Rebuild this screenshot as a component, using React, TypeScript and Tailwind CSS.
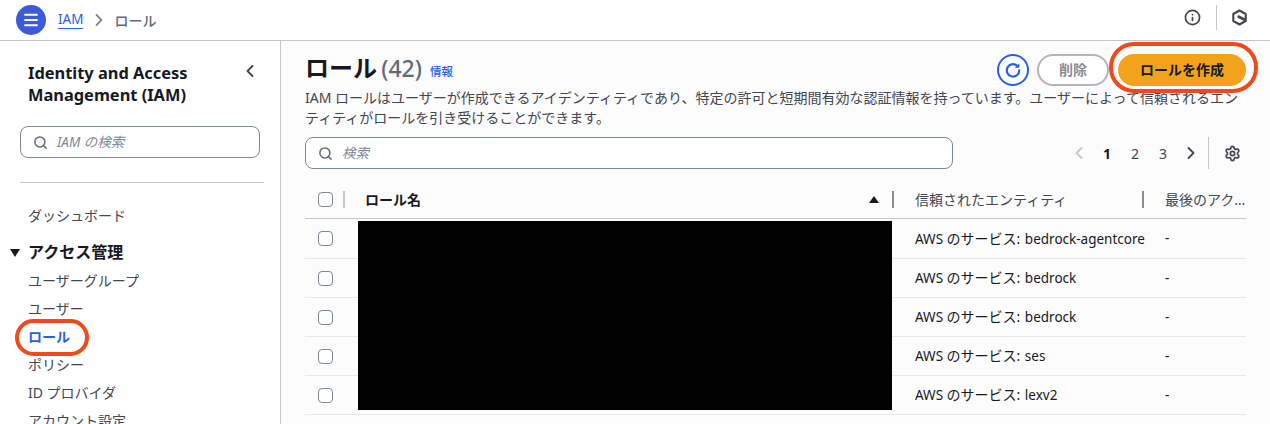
import { ChevronLeft, ChevronRight, Info, Menu, Search, Settings } from "lucide-react";

const navItems = ["ユーザーグループ", "ユーザー", "ロール", "ポリシー", "ID プロバイダ", "アカウント設定"];

const rows = ["bedrock-agentcore", "bedrock", "bedrock", "ses", "lexv2"];

function Checkbox() {
  return <div className="w-[15px] h-[15px] rounded-[4px] border border-[#7d8998] bg-white" />;
}

function SearchBox({ placeholder, className }: { placeholder: string; className: string }) {
  return (
    <div className={`flex items-center h-8 border border-[#7d8998] rounded-lg bg-white pl-[12px] ${className}`}>
      <Search className="w-[15px] h-[15px] text-[#5f6b7a]" strokeWidth={2.4} />
      <span className="ml-[9px] text-[13.5px] italic text-[#7d8998]">{placeholder}</span>
    </div>
  );
}

function Sidebar() {
  return (
    <aside className="w-[281px] shrink-0 border-r border-[#c6c6cd] bg-white pt-[21px] overflow-hidden">
      <div className="flex justify-between pl-[28px] pr-[20px]">
        <h2 className="text-[16.4px] leading-[22px] font-bold text-[#16191f]">
          Identity and Access
          <br />
          Management (IAM)
        </h2>
        <ChevronLeft className="w-5 h-5 text-[#424650] -mt-[1px]" strokeWidth={2.2} />
      </div>
      <SearchBox placeholder="IAM の検索" className="mx-[20px] mt-[20px]" />
      <div className="mx-[20px] mt-[24px] border-t border-[#c6c6cd] w-[244px]" />
      <div className="mt-[23px] pl-[28px] text-[14px] leading-[20px] text-[#424650]">ダッシュボード</div>
      <div className="relative mt-[16px] pl-[28px] text-[16px] leading-[20px] font-bold text-[#16191f]">
        <span className="absolute left-[10px] top-[7px] w-0 h-0 border-l-[5px] border-r-[5px] border-t-[8px] border-l-transparent border-r-transparent border-t-[#16191f]" />
        アクセス管理
      </div>
      <ul className="mt-[5px] pl-[28px] text-[14px] leading-[20px] text-[#424650]">
        {navItems.map((item) => (
          <li key={item} className={`h-[28px] flex items-center ${item === "ロール" ? "text-[#295eea] font-bold" : ""}`}>
            {item}
          </li>
        ))}
      </ul>
    </aside>
  );
}

function Row({ service, first }: { service: string; first: boolean }) {
  return (
    <div className={`grid grid-cols-[53px_536px_250px_1fr] items-center border-b border-[#e8e8ec] text-[13.5px] text-[#16191f] ${first ? "h-[40px]" : "h-[39px]"}`}>
      <div className="pl-[13px]">
        <Checkbox />
      </div>
      <div />
      <div className="pl-[21px] whitespace-nowrap">
        AWS <span className="text-[14px] mr-[1px]">のサービス:</span> {service}
      </div>
      <div className="pl-[21px]">-</div>
    </div>
  );
}

export default function App() {
  return (
    <div
      className="relative w-[1270px] h-[424px] overflow-hidden bg-white"
      style={{ fontFamily: '"Noto Sans", "Noto Sans CJK JP", sans-serif' }}
    >
      <header className="h-[41px] flex items-center border-b border-[#c6c6cd] bg-white pl-[16px] pr-[22px]">
        <div className="w-[30px] h-[30px] rounded-full bg-[#3b5bdb] flex items-center justify-center">
          <Menu className="w-[18px] h-[18px] text-white" strokeWidth={2.4} />
        </div>
        <span className="ml-[12px] text-[13.5px] text-[#295eea] border-b border-[#295eea] leading-[17px]">IAM</span>
        <ChevronRight className="w-[20px] h-[20px] ml-[6px] text-[#7d8998]" strokeWidth={2.2} />
        <span className="ml-[5px] text-[14px] text-[#5f6b7a] font-medium">ロール</span>
        <div className="ml-auto flex items-center -mt-[6px]">
          <Info className="w-[17px] h-[17px] text-[#424650]" strokeWidth={2.4} />
          <div className="w-px h-[25px] bg-[#c6c6cd] ml-[15px]" />
          <svg viewBox="0 0 18 18" className="w-[17px] h-[17px] ml-[14px]" fill="none" stroke="#424650" strokeWidth="2.2" strokeLinejoin="round" strokeLinecap="round">
            <path d="M9 1.6 15.6 5.3V12.7L9 16.4 2.4 12.7V5.3Z" />
            <path d="M8.2 8.2 14.5 11.4" strokeWidth="3" />
          </svg>
        </div>
      </header>

      <div className="flex h-[383px]">
        <Sidebar />
        <main className="flex-1 bg-[#fcfcfd] pl-[24px] pr-[24px] pt-[11px] overflow-hidden">
          <div className="flex items-center h-[35px]">
            <h1 className="text-[24px] font-bold text-[#16191f] leading-[32px] -mt-[3px]">
              ロール <span className="font-medium text-[#5f6b7a] text-[23px] -ml-[2px]">(42)</span>
            </h1>
            <span className="ml-[8px] mt-[4px] text-[11.5px] text-[#295eea] font-medium">情報</span>
            <div className="ml-auto flex items-center">
              <div className="w-[32px] h-[32px] rounded-full border-2 border-[#295eea] flex items-center justify-center bg-white">
                <svg viewBox="0 0 18 18" className="w-[18px] h-[18px]" fill="none" stroke="#295eea" strokeWidth="2.2" strokeLinecap="round">
                  <path d="M13.6 5.2A6.2 6.2 0 1 0 15.2 9.4" />
                  <path d="M15.4 2.2V6.8H10.8Z" fill="#295eea" stroke="none" />
                </svg>
              </div>
              <div className="ml-[8px] w-[72px] h-[32px] rounded-full border-2 border-[#b4b4bb] flex items-center justify-center text-[14px] font-bold text-[#8c8c94] bg-white">
                削除
              </div>
              <div className="ml-[9px] w-[128px] h-[32px] rounded-full bg-[#f2a31b] flex items-center justify-center text-[14px] font-bold text-[#16191f]">
                ロールを作成
              </div>
            </div>
          </div>
          <p className="mt-[1px] text-[14px] leading-[20px] text-[#424650] w-[942px] whitespace-nowrap">
            IAM ロールはユーザーが作成できるアイデンティティであり、特定の許可と短期間有効な認証情報を持っています。ユーザーによって信頼されるエン
            <br />
            ティティがロールを引き受けることができます。
          </p>
          <div className="flex items-center mt-[9px] h-8">
            <SearchBox placeholder="検索" className="w-[648px]" />
            <div className="ml-auto flex items-center text-[14px] text-[#424650]">
              <ChevronLeft className="w-5 h-5 text-[#c6c6cd]" strokeWidth={2.2} />
              <span className="ml-[14px] font-bold text-[#16191f]">1</span>
              <span className="ml-[20px]">2</span>
              <span className="ml-[20px]">3</span>
              <ChevronRight className="w-5 h-5 ml-[14px] text-[#424650]" strokeWidth={2.2} />
              <div className="w-px h-[32px] bg-[#c6c6cd] ml-[7px]" />
              <Settings className="w-[17px] h-[17px] ml-[15px] mr-[5px] text-[#424650]" strokeWidth={2.4} />
            </div>
          </div>

          <div className="relative mt-[11px] w-[941px]">
            <div className="grid grid-cols-[53px_536px_250px_1fr] h-[39px] items-center border-b border-[#c6c6cd] text-[14px] text-[#424650]">
              <div className="flex items-center pl-[13px]">
                <Checkbox />
                <div className="w-[2px] h-[17px] bg-[#c6c6cd] ml-[10px]" />
              </div>
              <div className="flex items-center pl-[7px] font-bold text-[#16191f]">
                ロール名
                <span className="ml-auto w-0 h-0 border-l-[5px] border-r-[5px] border-b-[7px] border-l-transparent border-r-transparent border-b-[#16191f]" />
                <div className="w-[2px] h-[17px] bg-[#8c8c94] ml-[13px]" />
              </div>
              <div className="flex items-center pl-[21px]">
                信頼されたエンティティ
                <div className="w-[2px] h-[17px] bg-[#8c8c94] ml-auto" />
              </div>
              <div className="pl-[21px] whitespace-nowrap overflow-hidden text-ellipsis">最後のアクティビティ</div>
            </div>
            {rows.map((service, i) => (
              <Row key={i} service={service} first={i === 0} />
            ))}
            <div className="absolute left-[53px] top-[41px] w-[534px] h-[189px] bg-black" />
          </div>
        </main>
      </div>

      {/* 赤枠 */}
      <div className="absolute left-[15px] top-[319px] w-[74px] h-[37px] rounded-full border-[4px] border-[#ef4a1a]" />
      <div className="absolute left-[1109px] top-[42px] w-[149px] h-[51px] rounded-[25px] border-[4px] border-[#ef4a1a]" />
    </div>
  );
}
